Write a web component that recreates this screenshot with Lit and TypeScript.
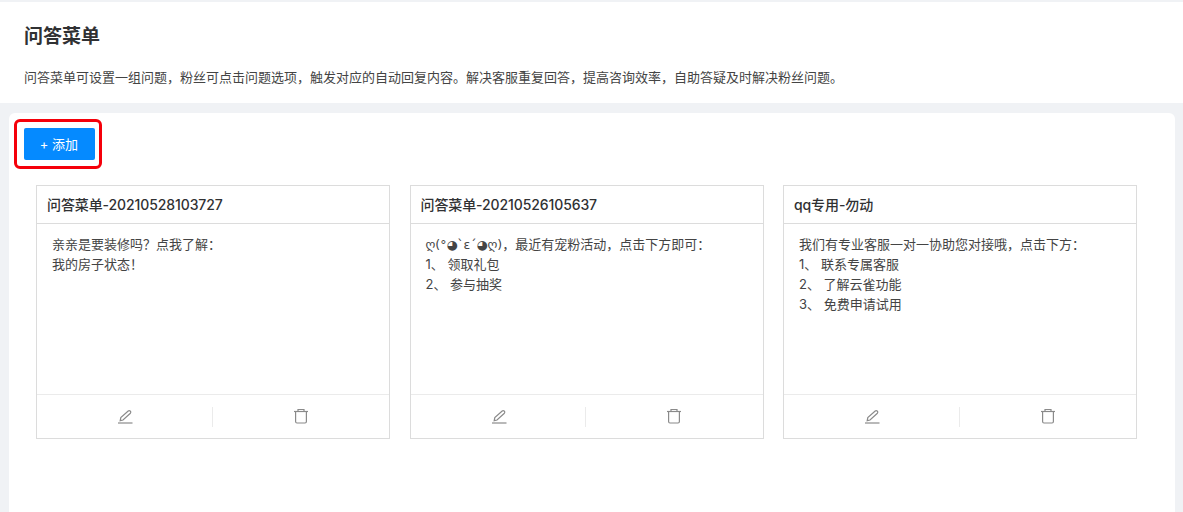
import { LitElement, html, css } from "lit";
import { customElement } from "lit/decorators.js";

const cards = [
  { title: "问答菜单-20210528103727", lines: [html`亲亲是要装修吗？点我了解：`, html`我的房子状态！`] },
  { title: "问答菜单-20210526105637", lines: [html`<span class="face">ღ(°◕\`ε´◕ღ)</span>，最近有宠粉活动，点击下方即可：`, html`1、 领取礼包`, html`2、 参与抽奖`] },
  { title: "qq专用-勿动", lines: [html`我们有专业客服一对一协助您对接哦，点击下方：`, html`1、 联系专属客服`, html`2、 了解云雀功能`, html`3、 免费申请试用`] },
];

@customElement("app-root")
export class AppRoot extends LitElement {
  static styles = css`
    :host {
      display: block;
      height: 512px;
      overflow: hidden;
      background: #f0f2f5;
      font-family: "Inter", "Noto Sans CJK SC", "Liberation Sans", sans-serif;
      color: #303133;
    }
    .head {
      height: 101px;
      margin-top: 2px;
      background: #fff;
      padding: 0 24px;
      box-sizing: border-box;
    }
    h1 {
      margin: 0;
      padding-top: 21px;
      font-size: 19px;
      line-height: 27px;
      font-weight: 600;
      color: #303133;
    }
    .desc {
      margin: 17px 0 0;
      font-size: 13px;
      line-height: 20px;
      color: #444;
    }
    .panel {
      margin: 10px 8px 0 9px;
      height: 399px;
      background: #fff;
      border-radius: 6px 6px 0 0;
      padding: 15px 15px 0;
      box-sizing: border-box;
      position: relative;
    }
    .add {
      display: block;
      width: 71px;
      height: 32px;
      border: 0;
      border-radius: 2px;
      background: #058aff;
      color: #fff;
      font: inherit;
      font-size: 13px;
      padding: 0 1px 2px 0;
    }
    .mark {
      position: absolute;
      left: 4.5px;
      top: 6px;
      width: 82px;
      height: 44px;
      border: 3px solid #f5000a;
      border-radius: 6px;
    }
    .grid {
      display: grid;
      grid-template-columns: repeat(3, 354px);
      column-gap: 19.5px;
      margin: 25px 0 0 12px;
    }
    .card {
      height: 254px;
      box-sizing: border-box;
      border: 1px solid #dcdcdc;
      display: flex;
      flex-direction: column;
    }
    .title {
      height: 38px;
      box-sizing: border-box;
      border-bottom: 1px solid #dcdcdc;
      padding: 0 10px;
      font-size: 14px;
      line-height: 37px;
      font-weight: 500;
      letter-spacing: -0.1px;
      color: #303133;
    }
    .body {
      flex: 1;
      padding: 10px 15px 0;
      font-size: 13px;
      line-height: 20px;
      color: #444;
    }
    .line {
      height: 20px;
    }
    .face {
      font-family: "DejaVu Sans", sans-serif;
      font-size: 12.5px;
      line-height: 1;
    }
    .foot {
      height: 44px;
      box-sizing: border-box;
      border-top: 1px solid #ebebeb;
      padding-right: 2px;
      display: flex;
      align-items: center;
    }
    .action {
      flex: 1;
      height: 20px;
      display: flex;
      align-items: center;
      justify-content: center;
    }
    .action + .action {
      border-left: 1px solid #ebebeb;
    }
    svg {
      display: block;
      width: 16px;
      height: 16px;
      margin: 0 0 2px 2px;
      fill: none;
      stroke: #8a8a8a;
      stroke-width: 1.2;
    }
  `;

  private edit() {
    return html`<svg viewBox="0 0 16 16">
      <path d="M1 15H15.5" />
      <path d="M3.2 12.6L3.8 9.6L11.2 3Q12.2 2.2 13.2 3Q14.4 4.2 13.4 5.2L6 12Z" />
    </svg>`;
  }

  private trash() {
    return html`<svg viewBox="0 0 16 16">
      <path d="M1 3.5H15" />
      <path d="M5 3.5V1.5H11V3.5" />
      <path d="M2.6 3.5V13.5Q2.6 15 4 15H12Q13.4 15 13.4 13.5V3.5" />
    </svg>`;
  }

  render() {
    return html`
      <div class="head">
        <h1>问答菜单</h1>
        <p class="desc">问答菜单可设置一组问题，粉丝可点击问题选项，触发对应的自动回复内容。解决客服重复回答，提高咨询效率，自助答疑及时解决粉丝问题。</p>
      </div>
      <div class="panel">
        <button class="add">+ 添加</button>
        <div class="mark"></div>
        <div class="grid">
          ${cards.map(
            (c) => html`<div class="card">
              <div class="title">${c.title}</div>
              <div class="body">${c.lines.map((l) => html`<div class="line">${l}</div>`)}</div>
              <div class="foot">
                <div class="action">${this.edit()}</div>
                <div class="action">${this.trash()}</div>
              </div>
            </div>`
          )}
        </div>
      </div>
    `;
  }
}
